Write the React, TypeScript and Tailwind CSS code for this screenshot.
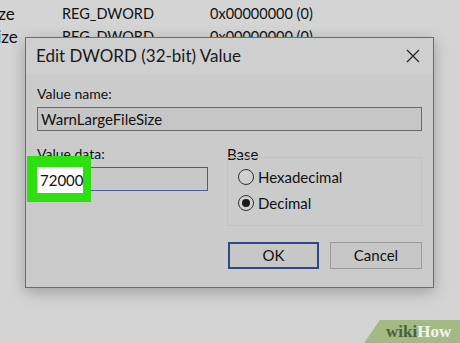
import React from "react";

const ui = { fontFamily: 'Lato, "Noto Sans", sans-serif' };

function Radio({ checked, label }: { checked?: boolean; label: string }) {
  return (
    <div className="flex items-center gap-[4px] h-[26px]">
      <span className="w-[16px] h-[16px] rounded-full border border-[#333] bg-[#d0d0d0] flex items-center justify-center">
        {checked && <span className="w-[8px] h-[8px] rounded-full bg-[#1a1a1a]" />}
      </span>
      <span className="text-[15px] text-[#111] leading-none">{label}</span>
    </div>
  );
}

export default function App() {
  return (
    <div className="relative w-[460px] h-[343px] overflow-hidden bg-[#d4d4d4] text-[#111]" style={ui}>
      {/* registry rows behind */}
      <div className="flex flex-col pt-[2px] text-[14.5px]">
        <div className="flex h-[23px] items-center">
          <span className="w-[62px] shrink-0 text-[17px]">
            <span className="inline-block -ml-[15px]">Size</span>
          </span>
          <span className="w-[148px] shrink-0">REG_DWORD</span>
          <span>0x00000000 (0)</span>
        </div>
        <div className="flex h-[23px] items-center">
          <span className="w-[62px] shrink-0 text-[17px]">
            <span className="inline-block -ml-[12px]">Size</span>
          </span>
          <span className="w-[148px] shrink-0">REG_DWORD</span>
          <span>0x00000000 (0)</span>
        </div>
      </div>

      {/* dialog */}
      <div className="absolute left-[25px] top-[37px] w-[409px] h-[251px] border border-[#5b6f96] bg-[#cbcbcb] shadow-[0_4px_14px_rgba(0,0,0,0.25)] flex flex-col">
        <div className="h-[36px] flex items-center justify-between pl-[10px] pr-[13px] bg-[#cfcfcf]">
          <span className="text-[17px] text-[#1a1a1a]">Edit DWORD (32-bit) Value</span>
          <svg width="14" height="14" viewBox="0 0 14 14">
            <path d="M1 1 L13 13 M13 1 L1 13" stroke="#222" strokeWidth="1.2" />
          </svg>
        </div>
        <div className="flex-1 flex flex-col px-[11px] pt-[11px]">
          <div className="text-[14px] leading-[18px]">Value name:</div>
          <div className="mt-[4px] h-[24px] border border-[#6a6a6a] bg-[#c6c6c6] flex items-center px-[3px] text-[15px]">
            WarnLargeFileSize
          </div>
          <div className="flex mt-[14px] gap-[19px]">
            <div className="w-[171px] flex flex-col">
              <div className="text-[14px] leading-[18px]">Value data:</div>
              <div className="relative mt-[4px] h-[24px] border border-[#4a5a9a] bg-[#c8c8c8]">
                <div className="absolute -left-[11px] -top-[12px] w-[64px] h-[46px] bg-[#2ee00f]" />
                <div className="absolute -left-[1px] -top-[1px] w-[46px] h-[26px] bg-white flex items-center pl-[3px] text-[15px]">
                  72000
                </div>
              </div>
            </div>
            <div className="flex-1 flex flex-col">
              <div className="text-[15px] leading-[18px]">Base</div>
              <div className="border border-[#c2c2c2] h-[69px] -mt-[6px] pl-[10px] pt-[6px] flex flex-col">
                <Radio label="Hexadecimal" />
                <Radio checked label="Decimal" />
              </div>
            </div>
          </div>
          <div className="flex justify-end gap-[11px] mt-[16px]">
            <button className="w-[91px] h-[27px] border-2 border-[#2c4a86] bg-[#c7c7c7] text-[15px]">OK</button>
            <button className="w-[92px] h-[27px] border border-[#9a9a9a] bg-[#c7c7c7] text-[15px]">Cancel</button>
          </div>
        </div>
      </div>

      {/* wikiHow badge */}
      <div className="absolute right-0 bottom-0 w-[96px] h-[23px]">
        <svg width="96" height="23" viewBox="0 0 96 23" className="absolute inset-0">
          <polygon points="16,0 96,0 96,23 0,23" fill="#a3ba85" />
        </svg>
        <div className="relative flex items-center h-full pl-[22px] text-[17px] font-bold leading-none" style={{ fontFamily: '"Liberation Serif", serif' }}>
          <span className="text-[#4a6238]">wiki</span>
          <span className="text-[#f2f5ee]">How</span>
        </div>
      </div>
    </div>
  );
}
